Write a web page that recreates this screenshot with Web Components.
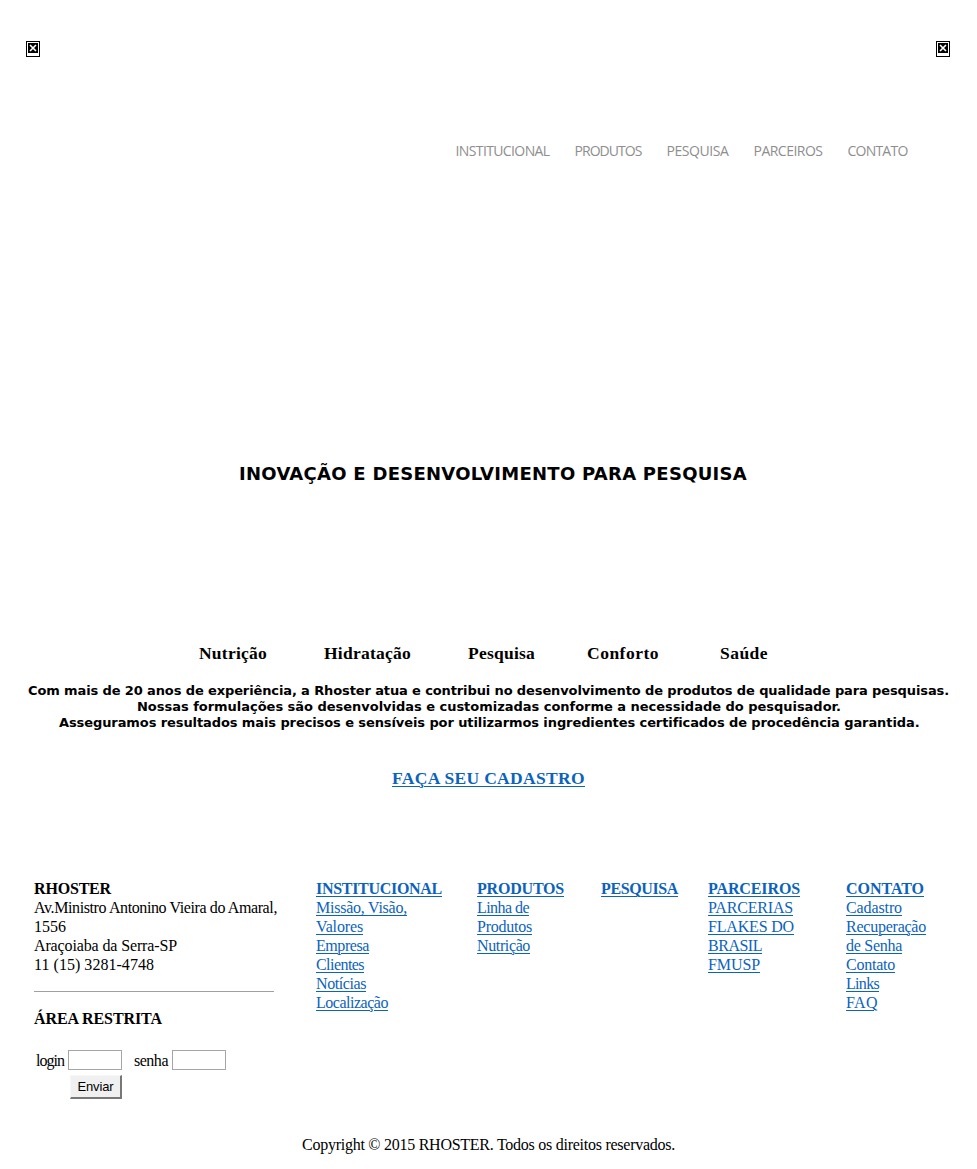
<!DOCTYPE html>
<html lang="pt-BR">
<head>
<meta charset="utf-8">
<title>RHOSTER</title>
<style>
html,body{margin:0;background:#fff;color:#000;font-family:"Liberation Serif",serif;font-size:16px}
</style>
</head>
<body>
<rhoster-page></rhoster-page>
<script>
const define = (name, html, init) => customElements.define(name, class extends HTMLElement {
  connectedCallback() {
    if (this.shadowRoot) return;
    const t = document.createElement('template');
    t.innerHTML = html;
    this.attachShadow({mode: 'open'}).append(t.content.cloneNode(true));
    if (init) init.call(this, this.shadowRoot);
  }
});

/* One line of text whose tracking is tuned to a given width (w). */
define('text-line', `<style>:host{display:block;white-space:nowrap}span{display:inline-block}
:host([link]) span{color:#0b63bd;text-decoration:underline;text-decoration-thickness:1px;text-underline-offset:2px}</style><span><slot></slot></span>`, function (root) {
  const s = root.querySelector('span'), w = +this.getAttribute('w');
  if (w) s.style.letterSpacing = (w - s.getBoundingClientRect().width) / this.textContent.length + 'px';
});

define('missing-image', `<style>:host{display:block;width:14px;height:16px}svg{display:block}</style>
<svg width="14" height="16" viewBox="0 0 14 16" shape-rendering="crispEdges"><path d="M.5.5h13v15H.5z" fill="#fff" stroke="#000"/><path d="M2 2h10v10H2z"/><path d="M4 4l6 6M10 4l-6 6" stroke="#fff" stroke-width="1.6" shape-rendering="auto"/></svg>`);

define('site-header', `<style>:host{display:block;height:455px;box-sizing:border-box;padding:41px 27px 0 26px}
.icons{display:flex;justify-content:space-between}
nav{display:flex;margin:84px 0 0 429.5px;font:14px/20px "Open Sans",sans-serif;color:#8e8e8e}
.a{width:119px}.b{width:92px}.c{width:87px}.d{width:94px}</style>
<div class="icons"><missing-image></missing-image><missing-image></missing-image></div>
<nav><text-line class="a" w="94">INSTITUCIONAL</text-line><text-line class="b" w="67">PRODUTOS</text-line><text-line class="c" w="62">PESQUISA</text-line><text-line class="d" w="69">PARCEIROS</text-line><text-line w="60">CONTATO</text-line></nav>`);

define('site-intro', `<style>:host{display:block;height:424px;font-weight:bold}
.title{font:bold 18px/22px "DejaVu Sans",sans-serif;padding:8px 0 0 239px}
.topics{display:grid;grid-template-columns:125px 144px 119px 133px 60px;padding:158px 0 0 199px;font-size:17.5px;line-height:20px}
.copy{font:bold 13px/16px "DejaVu Sans",sans-serif;padding-top:20px}
.l1{padding-left:28px}.l2{padding-left:137px}.l3{padding-left:59px}
.join{font-size:17.5px;line-height:20px;padding:37px 0 0 392px}</style>
<div class="title"><text-line w="508">INOVAÇÃO E DESENVOLVIMENTO PARA PESQUISA</text-line></div>
<div class="topics"><text-line w="68">Nutrição</text-line><text-line w="87">Hidratação</text-line><text-line w="67">Pesquisa</text-line><text-line w="72">Conforto</text-line><text-line w="48">Saúde</text-line></div>
<div class="copy"><text-line class="l1" w="921">Com mais de 20 anos de experiência, a Rhoster atua e contribui no desenvolvimento de produtos de qualidade para pesquisas.</text-line>
<text-line class="l2" w="704">Nossas formulações são desenvolvidas e customizadas conforme a necessidade do pesquisador.</text-line>
<text-line class="l3" w="860">Asseguramos resultados mais precisos e sensíveis por utilizarmos ingredientes certificados de procedência garantida.</text-line></div>
<div class="join"><text-line link w="193">FAÇA SEU CADASTRO</text-line></div>`);

define('login-form', `<style>:host{display:block}
.row{display:flex;align-items:center;height:20px;padding-left:2px;line-height:19px}
input{box-sizing:border-box;width:54px;height:20px;border:1px solid #a5a5a5;padding:0;margin:0;background:#fff;border-radius:0}
.u{width:32px}.p{width:38px;margin-left:12px}
button{display:flex;align-items:center;justify-content:center;box-sizing:border-box;width:52px;height:24px;margin:5px 0 0 36px;padding:0;background:#f0f0f0;border:solid;border-width:1px 2px 2px 1px;border-color:#f7f7f7 #777 #777 #f7f7f7;border-radius:0;font:13px "Liberation Sans",sans-serif;color:#000}</style>
<div class="row"><text-line class="u" w="28">login</text-line><input type="text" aria-label="login"><text-line class="p" w="34">senha</text-line><input type="password" aria-label="senha"></div>
<button type="button"><text-line w="36">Enviar</text-line></button>`);

define('site-footer', `<style>:host{display:block;line-height:19px}
.cols{display:grid;grid-template-columns:282px 161px 124px 107px 138px 100px;padding-left:34px;height:256px}
.h{font-weight:bold}hr{width:240px;height:1px;border:0;background:#a0a0a0;margin:17px 0}
login-form{margin-top:22px}.copyright{padding-left:302px}</style>
<div class="cols">
<section><text-line class="h" w="77">RHOSTER</text-line><text-line w="243">Av.Ministro Antonino Vieira do Amaral,</text-line><text-line w="32">1556</text-line><text-line w="143">Araçoiaba da Serra-SP</text-line><text-line w="120">11 (15) 3281-4748</text-line><hr><text-line class="h" w="128">ÁREA RESTRITA</text-line><login-form></login-form></section>
<section><text-line link class="h" w="126">INSTITUCIONAL</text-line><text-line link w="91">Missão, Visão,</text-line><text-line link w="47">Valores</text-line><text-line link w="53">Empresa</text-line><text-line link w="48">Clientes</text-line><text-line link w="50">Notícias</text-line><text-line link w="72">Localização</text-line></section>
<section><text-line link class="h" w="87">PRODUTOS</text-line><text-line link w="52">Linha de</text-line><text-line link w="55">Produtos</text-line><text-line link w="53">Nutrição</text-line></section>
<section><text-line link class="h" w="77">PESQUISA</text-line></section>
<section><text-line link class="h" w="92">PARCEIROS</text-line><text-line link w="85">PARCERIAS</text-line><text-line link w="86">FLAKES DO</text-line><text-line link w="54">BRASIL</text-line><text-line link w="52">FMUSP</text-line></section>
<section><text-line link class="h" w="78">CONTATO</text-line><text-line link w="56">Cadastro</text-line><text-line link w="80">Recuperação</text-line><text-line link w="56">de Senha</text-line><text-line link w="49">Contato</text-line><text-line link w="33">Links</text-line><text-line link w="32">FAQ</text-line></section>
</div>
<text-line class="copyright" w="373">Copyright © 2015 RHOSTER. Todos os direitos reservados.</text-line>`);

define('rhoster-page', `<style>:host{display:block;width:977px;height:1169px;overflow:hidden}</style><site-header></site-header><site-intro></site-intro><site-footer></site-footer>`);
</script>
</body>
</html>
